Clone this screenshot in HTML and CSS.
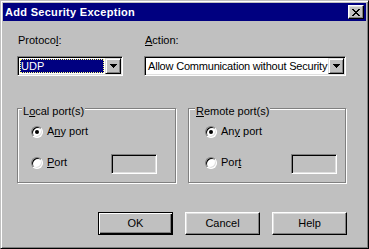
FILE: index.html
```html
<!DOCTYPE html>
<html lang="en">
<head>
    <meta charset="UTF-8">
    <title>Add Security Exception</title>
    <link rel="stylesheet" href="styles.css">
</head>
<body>
    <div class="window">
        <div class="titlebar">
            <span class="title">Add Security Exception</span>
            <span class="close-btn">
                <svg width="8" height="7" viewBox="0 0 8 7" shape-rendering="crispEdges">
                    <path d="M0 0h2v1H0z M6 0h2v1H6z M1 1h2v1H1z M5 1h2v1H5z M2 2h4v1H2z M3 3h2v1H3z M2 4h4v1H2z M1 5h2v1H1z M5 5h2v1H5z M0 6h2v1H0z M6 6h2v1H6z" fill="#000"/>
                </svg>
            </span>
        </div>

        <div class="dialog-body">
            <div class="field-row">
                <div class="field field-protocol">
                    <div class="field-label">Protoco<u>l</u>:</div>
                    <div class="combo">
                        <div class="combo-value"><span class="selected">UDP</span></div>
                        <span class="combo-arrow">
                            <svg width="7" height="4" viewBox="0 0 7 4" shape-rendering="crispEdges">
                                <path d="M0 0h7v1H0z M1 1h5v1H1z M2 2h3v1H2z M3 3h1v1H3z" fill="#000"/>
                            </svg>
                        </span>
                    </div>
                </div>
                <div class="field field-action">
                    <div class="field-label"><u>A</u>ction:</div>
                    <div class="combo">
                        <div class="combo-value"><span class="combo-text">Allow Communication without Security</span></div>
                        <span class="combo-arrow">
                            <svg width="7" height="4" viewBox="0 0 7 4" shape-rendering="crispEdges">
                                <path d="M0 0h7v1H0z M1 1h5v1H1z M2 2h3v1H2z M3 3h1v1H3z" fill="#000"/>
                            </svg>
                        </span>
                    </div>
                </div>
            </div>

            <div class="group-row">
                <div class="group group-local">
                    <div class="group-title">L<u>o</u>cal port(s)</div>
                    <div class="radio-row">
                        <div class="radio-option">
                            <span class="radio checked"></span>
                            <span class="radio-label">A<u>n</u>y port</span>
                        </div>
                    </div>
                    <div class="radio-row port-row">
                        <div class="radio-option">
                            <span class="radio"></span>
                            <span class="radio-label"><u>P</u>ort</span>
                        </div>
                        <span class="textbox"></span>
                    </div>
                </div>
                <div class="group group-remote">
                    <div class="group-title"><u>R</u>emote port(s)</div>
                    <div class="radio-row">
                        <div class="radio-option">
                            <span class="radio checked"></span>
                            <span class="radio-label">An<u>y</u> port</span>
                        </div>
                    </div>
                    <div class="radio-row port-row">
                        <div class="radio-option">
                            <span class="radio"></span>
                            <span class="radio-label">Por<u>t</u></span>
                        </div>
                        <span class="textbox"></span>
                    </div>
                </div>
            </div>

            <div class="button-row">
                <button class="btn btn-default">OK</button>
                <button class="btn">Cancel</button>
                <button class="btn">Help</button>
            </div>
        </div>
    </div>
</body>
</html>
```

FILE: styles.css
```css
* {
    box-sizing: border-box;
    margin: 0;
    padding: 0;
}

body {
    background: #c0c0c0;
    font-family: "Liberation Sans", Arial, sans-serif;
    font-size: 11px;
    line-height: 13px;
    color: #000;
}

u {
    text-underline-offset: 1px;
}

.window {
    width: 369px;
    height: 249px;
    background: #c0c0c0;
    border: 1px solid;
    border-color: #c0c0c0 #000 #000 #c0c0c0;
    box-shadow: inset 1px 1px 0 #fff, inset -1px -1px 0 #808080;
    padding: 2px;
    display: flex;
    flex-direction: column;
}

.titlebar {
    height: 18px;
    background: #000080;
    color: #fff;
    font-weight: bold;
    letter-spacing: 0.3px;
    display: flex;
    align-items: center;
    justify-content: space-between;
    padding: 0 2px;
}

.close-btn {
    width: 16px;
    height: 14px;
    background: #c0c0c0;
    border: 1px solid;
    border-color: #fff #000 #000 #fff;
    box-shadow: inset -1px -1px 0 #808080, inset 1px 1px 0 #dfdfdf;
    display: flex;
    align-items: center;
    justify-content: center;
}

.dialog-body {
    padding: 13px 19px 0 14px;
    display: flex;
    flex-direction: column;
}

/* top row: protocol / action */
.field-row {
    display: flex;
    gap: 21px;
}

.field-protocol {
    width: 106px;
}

.field-action {
    width: 202px;
}

.field-label {
    padding-left: 1px;
    margin-bottom: 9px;
}

.combo {
    height: 20px;
    background: #fff;
    border: 1px solid;
    border-color: #808080 #fff #fff #808080;
    box-shadow: inset 1px 1px 0 #000, inset -1px -1px 0 #dfdfdf;
    padding: 1px;
    display: flex;
}

.combo-value {
    flex: 1;
    display: flex;
    align-items: center;
    padding: 1px;
    min-width: 0;
}

.combo-value .selected {
    flex: 1;
    height: 100%;
    background: #000080;
    color: #fff;
    padding-left: 1px;
    display: flex;
    align-items: center;
    outline: 1px dotted #ffff80;
    outline-offset: -1px;
}

.combo-text {
    padding-left: 1px;
    white-space: nowrap;
    letter-spacing: -0.2px;
}

.combo-arrow {
    width: 16px;
    height: 16px;
    background: #c0c0c0;
    border: 1px solid;
    border-color: #dfdfdf #000 #000 #dfdfdf;
    box-shadow: inset 1px 1px 0 #fff, inset -1px -1px 0 #808080;
    display: flex;
    align-items: center;
    justify-content: center;
}

/* port groups */
.group-row {
    display: flex;
    gap: 12px;
    margin-top: 32px;
}

.group {
    position: relative;
    height: 75px;
    border: 1px solid #808080;
    box-shadow: 1px 1px 0 #fff, inset 1px 1px 0 #fff;
    padding-top: 16px;
}

.group-local {
    width: 159px;
    padding-left: 13px;
}

.group-remote {
    width: 158px;
    padding-left: 16px;
}

.group-title {
    position: absolute;
    top: -4px;
    background: #c0c0c0;
    padding: 0 1px;
}

.group-local .group-title {
    left: 4px;
}

.group-remote .group-title {
    left: 6px;
}

.radio-row {
    display: flex;
    align-items: flex-start;
}

.port-row {
    margin-top: 17px;
}

.radio-option {
    display: flex;
    align-items: center;
}

.port-row .radio-option {
    margin-top: 1px;
}

.radio {
    position: relative;
    width: 12px;
    height: 12px;
    border-radius: 50%;
    background: #fff;
    border: 1px solid;
    border-color: #808080 #fff #fff #808080;
    box-shadow: inset 1px 1px 0 #000, inset -1px -1px 0 #dfdfdf;
    margin-right: 4px;
}

.radio.checked::after {
    content: "";
    position: absolute;
    left: 3px;
    top: 3px;
    width: 4px;
    height: 4px;
    border-radius: 50%;
    background: #000;
}

.group-local .port-row .radio-label {
    width: 64px;
}

.group-remote .port-row .radio-label {
    width: 70px;
}

.textbox {
    width: 46px;
    height: 20px;
    background: #c0c0c0;
    border: 1px solid;
    border-color: #808080 #fff #fff #808080;
    box-shadow: inset 1px 1px 0 #000, inset -1px -1px 0 #dfdfdf;
    margin-top: -1px;
}

/* buttons */
.button-row {
    display: flex;
    justify-content: flex-end;
    gap: 12px;
    margin-top: 29px;
}

.btn {
    width: 75px;
    height: 23px;
    background: #c0c0c0;
    font: inherit;
    color: #000;
    border: 1px solid;
    border-color: #fff #000 #000 #fff;
    box-shadow: inset -1px -1px 0 #808080, inset 1px 1px 0 #dfdfdf;
}

.btn-default {
    border-color: #000;
    box-shadow: inset 1px 1px 0 #fff, inset -1px -1px 0 #000, inset -2px -2px 0 #808080;
}
```
